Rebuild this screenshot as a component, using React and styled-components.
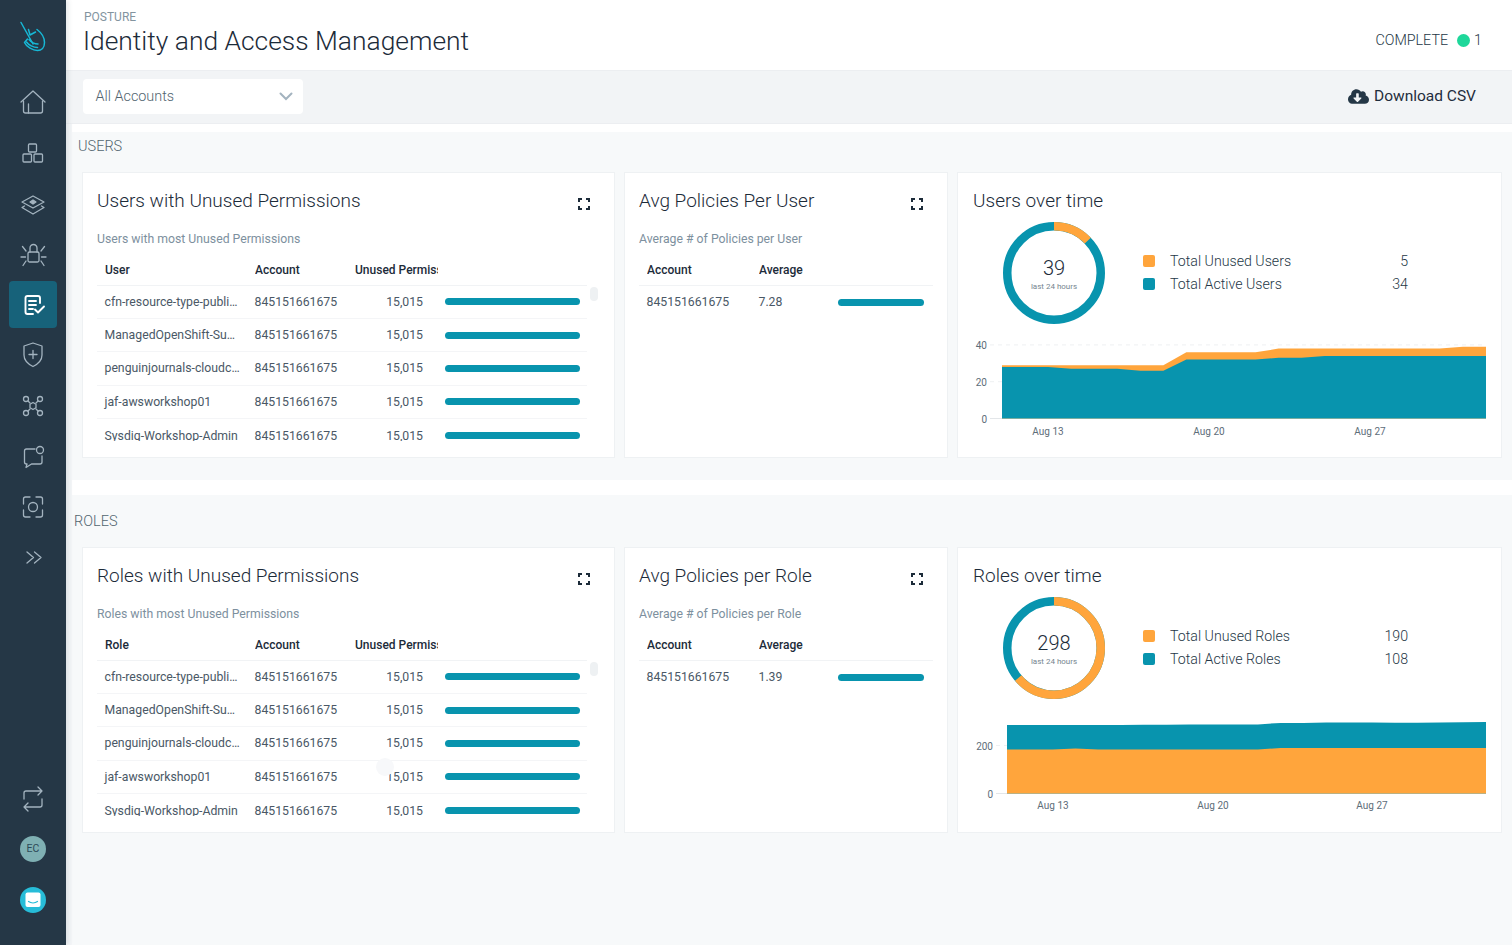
import React from "react";
import styled, { createGlobalStyle } from "styled-components";
import { FaCloudDownloadAlt } from "react-icons/fa";

const GlobalStyle = createGlobalStyle`
  html, body {
    margin: 0;
    padding: 0;
    background: #fff;
  }
  body {
    font-family: Roboto, "Liberation Sans", sans-serif;
    color: #253746;
    overflow: hidden;
  }
  * {
    box-sizing: border-box;
  }
`;

const TEAL = "#0894ae";
const ORANGE = "#ffa53c";

const Page = styled.div`
  display: flex;
  width: 1512px;
  height: 945px;
  overflow: hidden;
`;

const Sidebar = styled.nav`
  flex: 0 0 66px;
  display: flex;
  flex-direction: column;
  justify-content: space-between;
  background: #253746;
  padding-bottom: 22px;
  box-shadow: 2px 0 5px rgba(37, 55, 70, 0.12);
  z-index: 1;
`;

const NavGroup = styled.div`
  display: flex;
  flex-direction: column;
  align-items: center;
  gap: 3.5px;
`;

const LogoBox = styled.div`
  height: 79px;
  padding-bottom: 6px;
  display: flex;
  align-items: center;
  justify-content: center;
`;

const NavItem = styled.div`
  width: 48px;
  height: 47px;
  border-radius: 4px;
  display: flex;
  align-items: center;
  justify-content: center;
  background: ${(p) => (p.$active ? "#17627a" : "transparent")};
  svg {
    fill: none;
    stroke: ${(p) => (p.$active ? "#fff" : "#a3b3bf")};
    stroke-width: ${(p) => (p.$active ? 1.9 : 1.3)};
    stroke-linecap: round;
    stroke-linejoin: round;
  }
`;

const Avatar = styled.div`
  width: 26px;
  height: 26px;
  border-radius: 50%;
  background: #7fb0b3;
  color: #2c4a57;
  font-size: 10.5px;
  line-height: 26px;
  text-align: center;
`;

const Main = styled.main`
  flex: 1;
  min-width: 0;
  display: flex;
  flex-direction: column;
  background: #f4f6f8;
`;

const Header = styled.header`
  height: 70px;
  flex: none;
  background: #fff;
  display: flex;
  align-items: flex-start;
  justify-content: space-between;
  padding: 10px 30px 0 18px;
`;

const Eyebrow = styled.div`
  font-size: 12px;
  line-height: 14px;
  color: #83949f;
`;

const PageTitle = styled.h1`
  margin: 1px 0 0 -1px;
  font-size: 26.4px;
  line-height: 32px;
  font-weight: 300;
  color: #1c2b39;
`;

const Status = styled.div`
  display: flex;
  align-items: center;
  height: 14px;
  margin-top: 23px;
  font-size: 14.3px;
  font-weight: 300;
  color: #253746;
`;

const StatusDot = styled.span`
  width: 13px;
  height: 13px;
  border-radius: 50%;
  background: #1ed79a;
  margin: 0 4px 0 9px;
`;

const Toolbar = styled.div`
  height: 54px;
  flex: none;
  display: flex;
  align-items: center;
  justify-content: space-between;
  padding: 0 36px 1px 17px;
  background: #f2f4f6;
  border-top: 1px solid #eceef1;
  border-bottom: 1px solid #eceef1;
`;

const Select = styled.div`
  width: 220px;
  height: 35px;
  display: flex;
  align-items: center;
  justify-content: space-between;
  padding: 0 10px 0 12.5px;
  background: #fff;
  border-radius: 4px;
  font-size: 14.4px;
  font-weight: 300;
  color: #52656f;
`;

const DownloadButton = styled.div`
  display: flex;
  align-items: center;
  gap: 5px;
  margin-bottom: 1px;
  font-size: 15.5px;
  color: #1f2d3d;
  svg {
    color: #253746;
  }
`;

const Content = styled.div`
  flex: 1;
  margin-left: 6px;
  padding-top: 8px;
  display: flex;
  flex-direction: column;
  gap: 15px;
  background: #fff;
`;

const Section = styled.section`
  flex: ${(p) => (p.$fill ? 1 : "none")};
  padding: 0 10px ${(p) => (p.$fill ? 0 : 22)}px 10px;
  background: #f7f9fa;
`;

const SectionLabel = styled.h2`
  margin: 0 0 ${(p) => p.$below}px ${(p) => p.$inset}px;
  height: ${(p) => p.$height}px;
  display: flex;
  align-items: center;
  font-size: 14.5px;
  font-weight: 300;
  color: #52656f;
`;

const CardRow = styled.div`
  display: grid;
  grid-template-columns: 533px 324px 545px;
  column-gap: 9px;
`;

const Card = styled.article`
  height: 286px;
  padding: 15px 14px 0;
  background: #fff;
  border: 1px solid #eef1f3;
  overflow: hidden;
`;

const TimeFrame = styled(Card)`
  padding-left: 15px;
`;

const CardHead = styled.div`
  display: flex;
  align-items: center;
  justify-content: space-between;
  height: 26px;
  padding-right: 10px;
`;

const CardTitle = styled.h3`
  margin: 0;
  font-size: 19px;
  line-height: 26px;
  font-weight: 300;
  color: #1c2b39;
`;

const CardHint = styled.p`
  margin: 18px 0 0;
  font-size: 12.25px;
  line-height: 14px;
  color: #7d909e;
`;

const TableWrap = styled.div`
  position: relative;
  margin: 9px ${(p) => p.$trim || 0}px 0 0;
`;

const HeadRow = styled.div`
  display: grid;
  grid-template-columns: ${(p) => p.$cols};
  align-items: center;
  height: 30.5px;
  padding-left: 8px;
  border-bottom: 1px solid #f1f3f5;
  font-size: 12px;
  font-weight: 500;
  color: #1c2b39;
`;

const HeadCell = styled.div`
  overflow: hidden;
  white-space: nowrap;
`;

const TableBody = styled.div`
  height: 155px;
  overflow: hidden;
`;

const Row = styled.div`
  position: relative;
  display: grid;
  grid-template-columns: ${(p) => p.$cols};
  align-items: center;
  height: 33.4px;
  padding-left: 7.5px;
  border-bottom: 1px solid #f4f5f7;
  font-size: 12.25px;
  color: #4a5866;
  &:last-child {
    border-bottom: none;
  }
`;

const Cell = styled.div`
  white-space: nowrap;
`;

const ValueCell = styled(Cell)`
  text-align: right;
`;

const Bar = styled.div`
  height: 7px;
  width: ${(p) => p.$width}px;
  margin-left: ${(p) => p.$offset}px;
  border-radius: 3.5px;
  background: ${TEAL};
`;

const Thumb = styled.div`
  position: absolute;
  right: -11px;
  top: 32px;
  width: 8px;
  height: 14px;
  border-radius: 4px;
  background: #eef1f3;
`;

const CursorGhost = styled.div`
  position: absolute;
  left: 279px;
  top: -3px;
  width: 18px;
  height: 18px;
  border-radius: 50%;
  background: #f7f8fa;
`;

const SummaryRow = styled.div`
  display: flex;
  align-items: flex-start;
  gap: 38px;
  margin: 8px 0 0 30px;
`;

const Donut = styled.div`
  display: grid;
  width: 102px;
  height: 102px;
  place-items: center;
  > * {
    grid-area: 1 / 1;
  }
`;

const DonutCenter = styled.div`
  text-align: center;
  margin-top: 2px;
`;

const DonutValue = styled.div`
  font-size: 20px;
  line-height: 24px;
  font-weight: 300;
  color: #1c2b39;
`;

const DonutCaption = styled.div`
  font-size: 8px;
  line-height: 12px;
  margin-top: 1px;
  color: #76858f;
`;

const Legend = styled.div`
  width: 265px;
  margin-top: 27px;
  display: grid;
  grid-template-columns: 27px 1fr auto;
  grid-auto-rows: 23px;
  align-items: center;
  font-size: 14.2px;
  font-weight: 300;
  color: #253746;
`;

const LegendValue = styled.span`
  text-align: right;
`;

const Swatch = styled.span`
  width: 12px;
  height: 12px;
  border-radius: 2px;
  background: ${(p) => p.$color};
`;

const ChartFrame = styled.svg`
  display: block;
  margin: 12px 0 0 -15px;
  text {
    font-family: Roboto, "Liberation Sans", sans-serif;
    font-size: 10px;
    fill: #5d6d79;
  }
`;

const ExpandGlyph = styled.svg`
  margin-top: 6px;
`;

function Glyph({ children, size = 28, viewBox = "0 0 28 28" }) {
  return (
    <svg width={size} height={size} viewBox={viewBox}>
      {children}
    </svg>
  );
}

const navIcons = [
  <>
    <path d="M2 13 14 2l12 11" />
    <path d="M4.500 12v10a2 2 0 0 0 2 2h15a2 2 0 0 0 2-2V12" />
    <path d="M9.500 15v9" />
  </>,
  <>
    <rect x="9.500" y="5" width="8" height="8" rx="1" />
    <rect x="4" y="15" width="8.500" height="8" rx="1" />
    <rect x="15" y="15" width="8.500" height="8" rx="1" />
  </>,
  <>
    <path d="M14 6 25 12 14 18 3 12Z" />
    <path d="M14 10l3 2-3 2-3-2Z" fill="#a3b3bf" />
    <path d="M5.500 16 3 17.500 14 24l11-6.500L22.500 16" />
  </>,
  <>
    <rect x="9" y="12" width="11" height="10" rx="1.500" />
    <path d="M11 12V8a3.500 3.500 0 0 1 7 0v4" />
    <path d="M7 11 3.500 6.500M22 11l3.500-4.500M6.500 17H2M22.500 17H27M7 21l-3 4.500M22 21l3 4.500" />
  </>,
  <>
    <path d="M21 12V7a2 2 0 0 0-2-2H8.500a2 2 0 0 0-2 2v14a2 2 0 0 0 2 2H14" />
    <path d="M10 10h7M10 14h7M10 18h4" />
    <path d="M16 18.500l3 3 6-6" />
  </>,
  <>
    <path d="M14 2 5 5v9c0 6 5 9.500 9 11.500 4-2 9-5.500 9-11.500V5Z" />
    <path d="M14 9.500v8M10 13.500h8" />
  </>,
  <>
    <circle cx="7" cy="7" r="2.500" />
    <circle cx="21" cy="7" r="2.500" />
    <circle cx="7" cy="21" r="2.500" />
    <circle cx="21" cy="21" r="2.500" />
    <path d="M14 10.500l3 1.700v3.600l-3 1.700-3-1.700v-3.600Z" />
    <path d="M9 9l2 2M19 9l-2 2M9 19l2-2M19 19l-2-2" />
  </>,
  <>
    <path d="M16 7H7.500a2 2 0 0 0-2 2v11a2 2 0 0 0 2 2h.500L7 25.500 12.500 22H21a2 2 0 0 0 2-2v-6" />
    <circle cx="21" cy="8" r="3.500" />
  </>,
  <>
    <path d="M4.500 11V6a2 2 0 0 1 2-2H11M17 4h4.500a2 2 0 0 1 2 2v5M23.500 17v5a2 2 0 0 1-2 2H17M11 24H6.500a2 2 0 0 1-2-2v-5" />
    <circle cx="14" cy="14" r="4.500" />
  </>,
  <path d="M8 9l6.500 5.500L8 20M15.500 9l6.500 5.500L15.500 20" />,
];

function RepeatIcon() {
  return (
    <Glyph>
      <path d="M5 14V8a2 2 0 0 1 2-2h16M19 2l4 4-4 4" />
      <path d="M23 14v6a2 2 0 0 1-2 2H5M9 18l-4 4 4 4" />
    </Glyph>
  );
}

function Logo() {
  return (
    <svg width="30" height="34" viewBox="0 0 30 34" fill="none" stroke="#17b8d6" strokeWidth="1.500" strokeLinecap="round" strokeLinejoin="round">
      <path d="M3 2.500 15 24" />
      <path d="M10.500 9.500 12 15l5.500-3" />
      <path d="M19 9.500c4 3 7.500 8 7.500 13 0 5-3 8-7 8-4.500 0-11-3.500-13-8l3-3.500" />
      <path d="M8.500 22c2 3 7 5.500 11 5.500" />
      <path d="M11 19.500c2 2.500 5.500 4.500 9 4.500" />
    </svg>
  );
}

function ChatBadge() {
  return (
    <svg width="26" height="26" viewBox="0 0 26 26">
      <circle cx="13" cy="13" r="13" style={{ stroke: "none", fill: "#27bcd8" }} />
      <rect x="5.500" y="5.500" width="15" height="14.500" rx="2" style={{ stroke: "none", fill: "#fff" }} />
      <path d="M8.500 14.500c2.500 1.700 6.500 1.700 9 0" style={{ stroke: "#27bcd8", strokeWidth: 1.200 }} />
    </svg>
  );
}

function Chevron() {
  return (
    <svg width="14" height="9" viewBox="0 0 14 9" fill="none" stroke="#a3b3bf" strokeWidth="2" strokeLinecap="round">
      <path d="M1.500 1.500 7 7l5.500-5.500" />
    </svg>
  );
}

function ExpandIcon() {
  return (
    <ExpandGlyph width="12" height="12" viewBox="0 0 12 12" fill="none" stroke="#1c2b39" strokeWidth="2">
      <path d="M1 4V1h3M8 1h3v3M11 8v3H8M4 11H1V8" />
    </ExpandGlyph>
  );
}

function DonutChart({ part, total, caption = "last 24 hours" }) {
  const r = 46.75;
  const c = 2 * Math.PI * r;
  return (
    <Donut>
      <svg width="102" height="102" viewBox="0 0 102 102" fill="none" strokeWidth="8.500">
        <circle cx="51" cy="51" r={r} stroke={TEAL} />
        <circle
          cx="51"
          cy="51"
          r={r}
          stroke={ORANGE}
          strokeDasharray={`${(part / total) * c} ${c}`}
          transform="rotate(-90 51 51)"
        />
      </svg>
      <DonutCenter>
        <DonutValue>{total}</DonutValue>
        <DonutCaption>{caption}</DonutCaption>
      </DonutCenter>
    </Donut>
  );
}

function AreaChart({ x0, scale, lower, upper, lowerColor, upperColor, yTicks, xLabels, tickX, labelY }) {
  const baseY = 82.5;
  const x1 = 528;
  const step = (x1 - x0) / (lower.length - 1);
  const y = (v) => baseY - v * scale;
  const pts = (vals) => vals.map((v, i) => `${x0 + i * step},${y(v)}`).join(" ");
  return (
    <ChartFrame width="543" height="104" viewBox="0 0 543 104">
      {yTicks.map((t) => (
        <g key={t}>
          <line x1={tickX + 3} x2={x1} y1={y(t)} y2={y(t)} stroke={t ? "#eef0f2" : "#e3e6e9"} strokeDasharray={t ? "4 4" : undefined} />
          <text x={tickX} y={y(t) + 4} textAnchor="end">
            {t}
          </text>
        </g>
      ))}
      <polygon points={`${x0},${baseY} ${pts(upper)} ${x1},${baseY}`} fill={upperColor} />
      <polygon points={`${x0},${baseY} ${pts(lower)} ${x1},${baseY}`} fill={lowerColor} />
      {xLabels.map(([label, x]) => (
        <text key={label} x={x} y={labelY} textAnchor="middle">
          {label}
        </text>
      ))}
    </ChartFrame>
  );
}

const names = [
  "cfn-resource-type-publi…",
  "ManagedOpenShift-Su…",
  "penguinjournals-cloudc…",
  "jaf-awsworkshop01",
  "Sysdig-Workshop-Admin",
];

const PERM_COLS = "150px 101px 67.5px 1fr";
const PERM_HEAD = "150px 100px 83px";
const AVG_COLS = "112px 79px 1fr";

function PermissionsCard({ title, hint, column, ghostRow }) {
  return (
    <Card>
      <CardHead>
        <CardTitle>{title}</CardTitle>
        <ExpandIcon />
      </CardHead>
      <CardHint>{hint}</CardHint>
      <TableWrap $trim={13}>
        <HeadRow $cols={PERM_HEAD}>
          <HeadCell>{column}</HeadCell>
          <HeadCell>Account</HeadCell>
          <HeadCell>Unused Permissions</HeadCell>
        </HeadRow>
        <Thumb />
        <TableBody>
          {names.map((name, i) => (
            <Row key={name} $cols={PERM_COLS}>
              <Cell>{name}</Cell>
              <Cell>845151661675</Cell>
              <ValueCell>15,015</ValueCell>
              <Bar $width={135} $offset={22} />
              {ghostRow === i && <CursorGhost />}
            </Row>
          ))}
        </TableBody>
      </TableWrap>
    </Card>
  );
}

function AverageCard({ title, hint, value }) {
  return (
    <Card>
      <CardHead>
        <CardTitle>{title}</CardTitle>
        <ExpandIcon />
      </CardHead>
      <CardHint>{hint}</CardHint>
      <TableWrap>
        <HeadRow $cols={AVG_COLS}>
          <HeadCell>Account</HeadCell>
          <HeadCell>Average</HeadCell>
        </HeadRow>
        <TableBody>
          <Row $cols={AVG_COLS}>
            <Cell>845151661675</Cell>
            <Cell>{value}</Cell>
            <Bar $width={86} $offset={0} />
          </Row>
        </TableBody>
      </TableWrap>
    </Card>
  );
}

function TimeCard({ title, part, total, legend, chart }) {
  return (
    <TimeFrame>
      <CardTitle>{title}</CardTitle>
      <SummaryRow>
        <DonutChart part={part} total={total} />
        <Legend>
          {legend.map(([label, value, color]) => (
            <React.Fragment key={label}>
              <Swatch $color={color} />
              <span>{label}</span>
              <LegendValue>{value}</LegendValue>
            </React.Fragment>
          ))}
        </Legend>
      </SummaryRow>
      {chart}
    </TimeFrame>
  );
}

const userActive = [28, 28, 28, 27, 27, 27, 26, 26, 32, 32, 32, 32, 33, 33, 34, 34, 34, 34, 34, 34, 34, 34];
const userTotal = [29, 29, 29, 29, 29, 29, 29, 29, 36, 36, 36, 36, 38, 38, 38, 38, 38, 38, 38, 38, 39, 39];
const roleUnused = [183, 183, 183, 187, 183, 183, 183, 183, 183, 183, 183, 183, 190, 190, 190, 190, 190, 190, 190, 190, 190, 190];
const roleTotal = [285, 285, 285, 285, 285, 285, 286, 286, 287, 287, 287, 288, 294, 294, 296, 296, 296, 295, 295, 296, 297, 298];

export default function App() {
  return (
    <Page>
      <GlobalStyle />
      <Sidebar>
        <div>
          <LogoBox>
            <Logo />
          </LogoBox>
          <NavGroup>
            {navIcons.map((icon, i) => (
              <NavItem key={i} $active={i === 4}>
                <Glyph>{icon}</Glyph>
              </NavItem>
            ))}
          </NavGroup>
        </div>
        <NavGroup>
          <NavItem>
            <RepeatIcon />
          </NavItem>
          <NavItem>
            <Avatar>EC</Avatar>
          </NavItem>
          <NavItem>
            <ChatBadge />
          </NavItem>
        </NavGroup>
      </Sidebar>
      <Main>
        <Header>
          <div>
            <Eyebrow>POSTURE</Eyebrow>
            <PageTitle>Identity and Access Management</PageTitle>
          </div>
          <Status>
            COMPLETE
            <StatusDot />1
          </Status>
        </Header>
        <Toolbar>
          <Select>
            All Accounts
            <Chevron />
          </Select>
          <DownloadButton>
            <FaCloudDownloadAlt size={21} />
            Download CSV
          </DownloadButton>
        </Toolbar>
        <Content>
          <Section>
            <SectionLabel $inset={-4} $height={28} $below={12}>
              USERS
            </SectionLabel>
            <CardRow>
              <PermissionsCard title="Users with Unused Permissions" hint="Users with most Unused Permissions" column="User" />
              <AverageCard title="Avg Policies Per User" hint="Average # of Policies per User" value="7.28" />
              <TimeCard
                title="Users over time"
                part={5}
                total={39}
                legend={[
                  ["Total Unused Users", 5, ORANGE],
                  ["Total Active Users", 34, TEAL],
                ]}
                chart={
                  <AreaChart
                    x0={44}
                    scale={1.84}
                    lower={userActive}
                    upper={userTotal}
                    lowerColor={TEAL}
                    upperColor={ORANGE}
                    yTicks={[0, 20, 40]}
                    tickX={29}
                    labelY={98.5}
                    xLabels={[
                      ["Aug 13", 90],
                      ["Aug 20", 251],
                      ["Aug 27", 412],
                    ]}
                  />
                }
              />
            </CardRow>
          </Section>
          <Section $fill>
            <SectionLabel $inset={-8} $height={52} $below={0}>
              ROLES
            </SectionLabel>
            <CardRow>
              <PermissionsCard title="Roles with Unused Permissions" hint="Roles with most Unused Permissions" column="Role" ghostRow={3} />
              <AverageCard title="Avg Policies per Role" hint="Average # of Policies per Role" value="1.39" />
              <TimeCard
                title="Roles over time"
                part={190}
                total={298}
                legend={[
                  ["Total Unused Roles", 190, ORANGE],
                  ["Total Active Roles", 108, TEAL],
                ]}
                chart={
                  <AreaChart
                    x0={49}
                    scale={0.24}
                    lower={roleUnused}
                    upper={roleTotal}
                    lowerColor={ORANGE}
                    upperColor={TEAL}
                    yTicks={[0, 200]}
                    tickX={35}
                    labelY={97.5}
                    xLabels={[
                      ["Aug 13", 95],
                      ["Aug 20", 255],
                      ["Aug 27", 414],
                    ]}
                  />
                }
              />
            </CardRow>
          </Section>
        </Content>
      </Main>
    </Page>
  );
}
